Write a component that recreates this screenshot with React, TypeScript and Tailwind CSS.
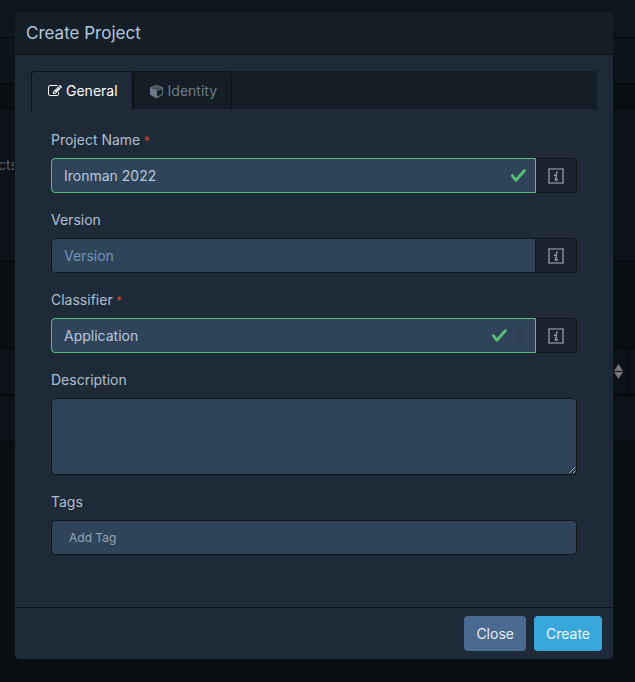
import { useState } from "react";
import type { ReactNode } from "react";

function EditIcon() {
  return (
    <svg viewBox="0 0 1792 1792" className="h-[14px] w-[14px] shrink-0" fill="currentColor" aria-hidden="true">
      <path d="M888 1184l116-116-152-152-116 116v56h96v96h56zm440-720q-16-16-33 1l-350 350q-17 17-1 33t33-1l350-350q17-17 1-33zm80 594v190q0 119-84.5 203.5t-203.5 84.5h-832q-119 0-203.5-84.5t-84.5-203.5v-832q0-119 84.5-203.5t203.5-84.5h832q63 0 117 25 15 7 18 23 3 17-9 29l-49 49q-14 14-32 8-23-6-45-6h-832q-66 0-113 47t-47 113v832q0 66 47 113t113 47h832q66 0 113-47t47-113v-126q0-13 9-22l64-64q15-15 35-7t20 29zm-96-738l288 288-672 672h-288v-288zm444 132l-92 92-288-288 92-92q28-28 68-28t68 28l152 152q28 28 28 68t-28 68z" />
    </svg>
  );
}

function CubeIcon() {
  return (
    <svg viewBox="0 0 1792 1792" className="h-[14px] w-[14px] shrink-0" aria-hidden="true">
      <path
        fill="currentColor"
        d="M896 1629l640-349v-636l-640 233v752zm-64-865l698-254-698-254-698 254zm832-252v768q0 35-18 65t-49 47l-704 384q-28 16-61 16t-61-16l-704-384q-31-17-49-47t-18-65v-768q0-40 23-73t61-47l704-256q22-8 44-8t44 8l704 256q38 14 61 47t23 73z"
      />
      <path fill="currentColor" fillOpacity="0.6" d="M832 764l698-254-698-254-698 254z" />
    </svg>
  );
}

function CheckIcon() {
  return (
    <svg viewBox="0 0 8 8" className="h-[17px] w-[17px]" aria-hidden="true">
      <path
        fill="#5bbd7a"
        d="M2.3 6.73L.6 4.53c-.4-1.04.46-1.4 1.1-.8l1.1 1.4 3.4-3.8c.6-.63 1.6-.27 1.2.7l-4 4.6c-.43.5-.8.4-1.1.1z"
      />
    </svg>
  );
}

function InfoIcon() {
  return (
    <svg viewBox="0 0 16 16" className="h-4 w-4" fill="none" stroke="#a3b0bd" aria-hidden="true">
      <path d="M0 1h16M0 15h16" strokeWidth="1" />
      <path d="M1 1v14M15 1v14" strokeWidth="1.6" stroke="#7d8b98" />
      <circle cx="8.8" cy="4.4" r="1" fill="#a3b0bd" stroke="none" />
      <path d="M6.2 7.8c.7-.9 1.5-1.200 2.100-1 .8.3-.8 3.600-.9 4.800-.1 1.200 1.400.9 2.300-.4" strokeWidth="1.200" />
    </svg>
  );
}

// shaded strips of the page behind the dialog
function Backdrop() {
  return (
    <div className="absolute inset-0 flex flex-col overflow-hidden bg-[#0a0f13]" aria-hidden="true">
      <div className="h-[38px] shrink-0 border-b border-[#04070a] bg-[#0e151b]" />
      <div className="h-[46px] shrink-0 border-b border-[#04070a] bg-[#0e141b]" />
      <div className="h-[25px] shrink-0 border-b border-[#04070a] bg-[#0a0f12]" />
      <div className="flex h-[153px] shrink-0 border-b border-[#04070a] bg-[#0d1118] pt-[46px]">
        <span className="-ml-0.5 text-sm leading-5 text-[#535c66]">cts</span>
      </div>
      <div className="h-[87px] shrink-0 border-b border-[#04070a]" />
      <div className="flex h-[47px] shrink-0 items-center justify-end border-b-2 border-[#04070a] bg-[#0d1118]">
        <svg viewBox="0 0 9 15" className="mr-[5px] h-[15px] w-[9px]" fill="#777777">
          <path d="M4.500 0L9 7H0zM4.500 15L0 8h9z" />
        </svg>
        <div className="h-full w-[7px] border-l border-[#04070a]" />
      </div>
      <div className="h-[46px] shrink-0 border-b border-[#04070a] bg-[#0d1118]" />
    </div>
  );
}

function Label({ htmlFor, required, children }: { htmlFor: string; required?: boolean; children: ReactNode }) {
  return (
    <label htmlFor={htmlFor} className="mb-2 block leading-[21px] text-[#b0bfd0]">
      {children}
      {required && <span className="text-xs text-[#d6402f]"> *</span>}
    </label>
  );
}

function InfoButton({ label }: { label: string }) {
  return (
    <button
      type="button"
      aria-label={label}
      className="flex w-[41px] shrink-0 items-center justify-center rounded-r border border-l-0 border-[#10161b] bg-[#1a242f]"
    >
      <InfoIcon />
    </button>
  );
}

export default function App() {
  const [name, setName] = useState("Ironman 2022");
  const [version, setVersion] = useState("");

  return (
    <div className="relative min-h-screen font-[Inter,'Liberation_Sans',sans-serif] text-sm">
      <Backdrop />
      <div className="relative pt-[11px] pr-[21px] pb-[22px] pl-[14px]">
        <div
          role="dialog"
          aria-labelledby="dialog-title"
          className="overflow-hidden rounded-md border border-[#0d1418] bg-[#1e2a37]"
        >
          <header className="border-b border-[#0e151a] bg-[#141e26] px-[11px] py-[9px]">
            <h5 id="dialog-title" className="text-[17px] leading-6 text-[#b4c6dd]">
              Create Project
            </h5>
          </header>

          <div className="p-4">
            <div className="bg-[#141e26]">
              <div role="tablist" className="flex">
                <button
                  type="button"
                  role="tab"
                  aria-selected="true"
                  className="flex h-[38px] items-center gap-1 rounded-t border border-b-0 border-[#0d1418] bg-[#1e2a37] pr-3.5 pl-4 text-white"
                >
                  <EditIcon />
                  General
                </button>
                <button
                  type="button"
                  role="tab"
                  aria-selected="false"
                  className="flex h-[38px] items-center gap-1 rounded-t border border-b-0 border-[#0d1418] pr-3.5 pl-4 text-[#6d7b89]"
                >
                  <CubeIcon />
                  Identity
                </button>
              </div>

              <form role="tabpanel" className="flex flex-col gap-4 rounded bg-[#1e2a37] px-5 pt-5 pb-9">
                <div>
                  <Label htmlFor="name" required>Project Name</Label>
                  <div className="flex h-[35px]">
                    <div className="relative min-w-0 flex-1">
                      <input
                        id="name"
                        value={name}
                        onChange={(e) => setName(e.target.value)}
                        className="h-full w-full rounded-l border border-[#5bbd7a] bg-[#2f4459] pr-9 pl-3 text-[#b6c8dc] outline-none"
                      />
                      <span className="pointer-events-none absolute inset-y-0 right-[9px] flex items-center">
                        <CheckIcon />
                      </span>
                    </div>
                    <InfoButton label="About project name" />
                  </div>
                </div>

                <div>
                  <Label htmlFor="version">Version</Label>
                  <div className="flex h-[35px]">
                    <input
                      id="version"
                      value={version}
                      placeholder="Version"
                      onChange={(e) => setVersion(e.target.value)}
                      className="min-w-0 flex-1 rounded-l border border-[#10161b] bg-[#2f4459] px-3 text-[#b6c8dc] outline-none placeholder:text-[#7595bd]"
                    />
                    <InfoButton label="About version" />
                  </div>
                </div>

                <div>
                  <Label htmlFor="classifier" required>Classifier</Label>
                  <div className="flex h-[35px]">
                    <div className="relative min-w-0 flex-1">
                      <select
                        id="classifier"
                        className="h-full w-full appearance-none rounded-l border border-[#5bbd7a] bg-[#2f4459] pr-14 pl-3 text-[#b6c8dc] outline-none"
                      >
                        <option>Application</option>
                        <option>Framework</option>
                        <option>Library</option>
                      </select>
                      <span className="pointer-events-none absolute inset-y-0 right-3 flex items-center gap-2">
                        <CheckIcon />
                        <svg viewBox="0 0 8 10" className="h-[10px] w-2" fill="#343a40" aria-hidden="true">
                          <path d="M4 0L0 4h8zM4 10L0 6h8z" />
                        </svg>
                      </span>
                    </div>
                    <InfoButton label="About classifier" />
                  </div>
                </div>

                <div>
                  <Label htmlFor="description">Description</Label>
                  <textarea
                    id="description"
                    className="block h-[77px] w-full resize-y rounded border border-[#10161b] bg-[#2f4459] px-3 py-1 text-[#b6c8dc] outline-none"
                  />
                </div>

                <div>
                  <Label htmlFor="tags">Tags</Label>
                  <input
                    id="tags"
                    placeholder="Add Tag"
                    className="h-[35px] w-full rounded border border-[#10161b] bg-[#2f4459] px-[17px] text-xs text-[#b6c8dc] outline-none placeholder:text-[#98a5b2]"
                  />
                </div>
              </form>
            </div>
          </div>

          <footer className="flex justify-end gap-2 border-t border-[#0e151a] px-[11px] py-2">
            <button type="button" className="h-[35px] rounded bg-[#4a6a8f] px-3 text-[#e9eff5]">
              Close
            </button>
            <button type="button" className="h-[35px] rounded bg-[#38a7da] px-3 text-[#f0f8fc]">
              Create
            </button>
          </footer>
        </div>
      </div>
    </div>
  );
}
